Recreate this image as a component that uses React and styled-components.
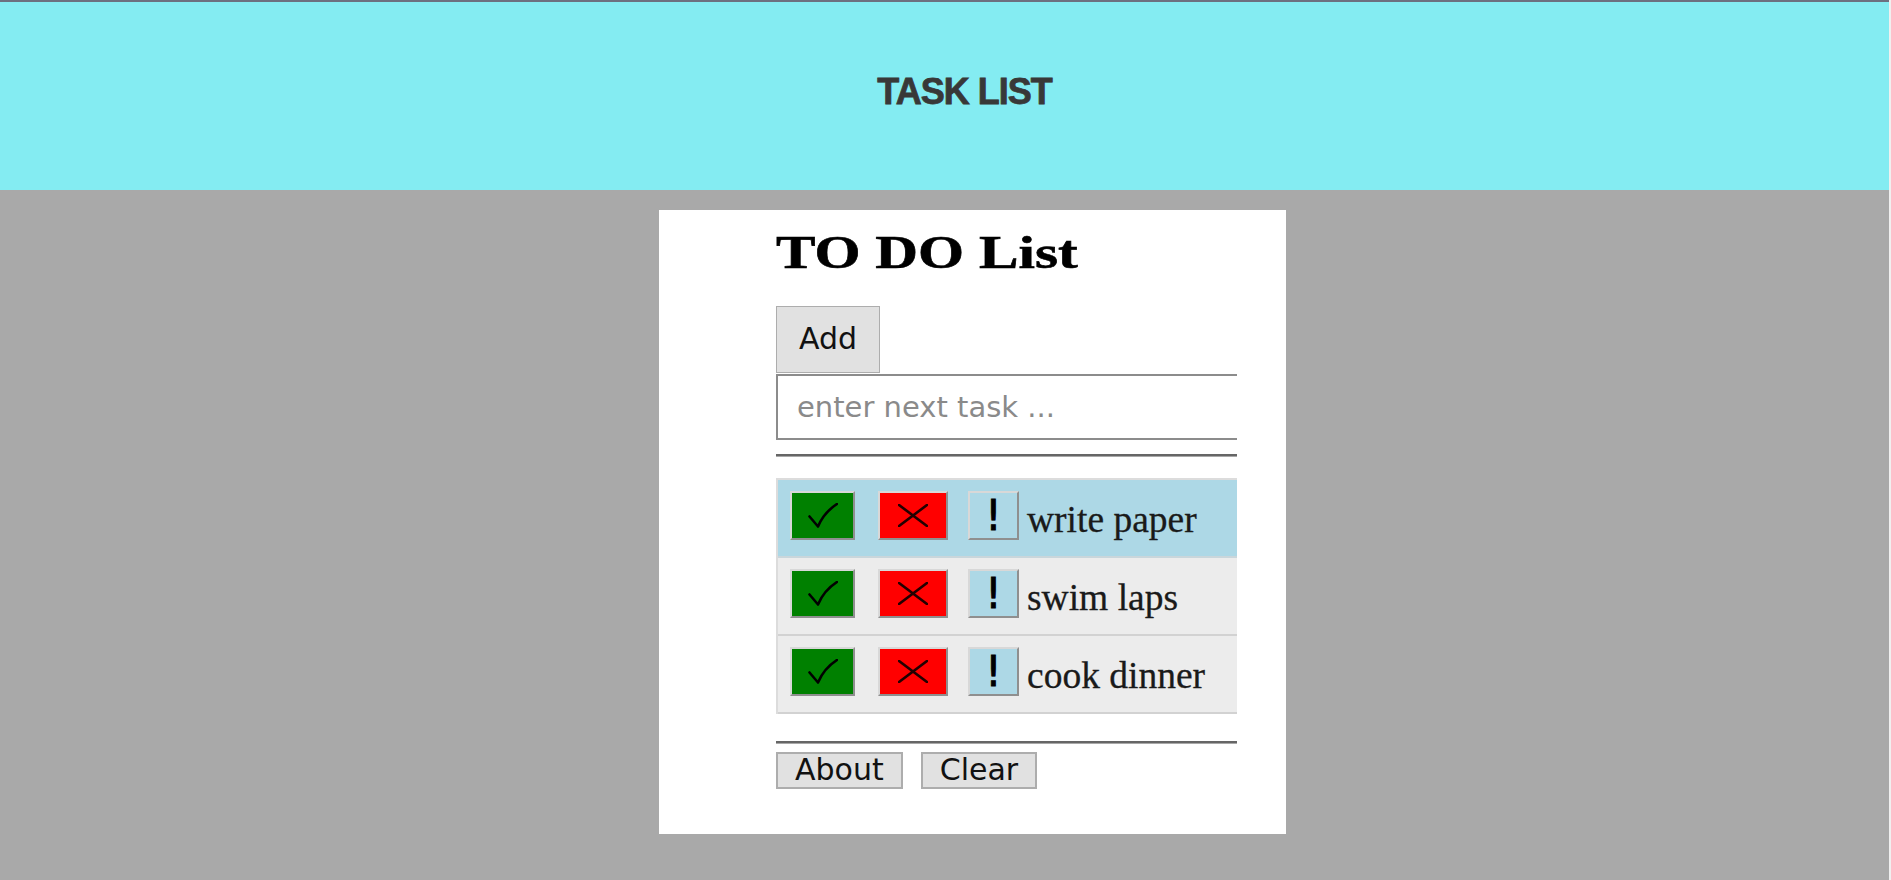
import React from "react";
import styled, { createGlobalStyle } from "styled-components";

const GlobalStyle = createGlobalStyle`
  html, body {
    margin: 0;
    padding: 0;
    background: #f0f0f0;
  }
  * {
    box-sizing: border-box;
  }
`;

const Page = styled.div`
  width: calc(100% - 2px);
  min-height: 100vh;
  background: #a9a9a9;
`;

const Header = styled.header`
  height: 190px;
  background: #84ecf2;
  border-top: 2px solid #6d7080;
  display: flex;
  align-items: center;
  justify-content: center;
  padding: 0 0 9px 40px;
`;

const HeaderTitle = styled.h1`
  margin: 0;
  font-family: "Liberation Sans", Arial, sans-serif;
  font-weight: bold;
  font-size: 36px;
  line-height: 1;
  letter-spacing: -1px;
  color: #383838;
  -webkit-text-stroke: 0.8px #383838;
`;

const Main = styled.main`
  display: flex;
  justify-content: center;
  padding: 20px 0 0 56px;
`;

const Card = styled.section`
  width: 627px;
  background: #ffffff;
  padding: 15px 49px 45px 117px;
`;

const App = styled.div`
  width: 461px;
  overflow: hidden;
  display: flex;
  flex-direction: column;
  align-items: flex-start;
`;

const Title = styled.h2`
  margin: 0;
  font-family: "Liberation Serif", serif;
  font-weight: bold;
  font-size: 47px;
  line-height: 54px;
  color: #000;
  -webkit-text-stroke: 0.6px #000;
  transform: scaleX(1.26);
  transform-origin: left center;
`;

const GreyButton = styled.button`
  font-family: "DejaVu Sans", Verdana, sans-serif;
  font-size: 30px;
  line-height: 1;
  color: #111;
  background: #e1e1e1;
  border: ${(p) => (p.$thick ? "2px" : "1px")} solid #adadad;
  padding: ${(p) => p.$pad};
  margin: 0;
  cursor: pointer;
`;

const InputRow = styled.div`
  margin-top: 1px;
`;

const TaskInput = styled.input`
  width: 540px;
  height: 66px;
  border: 2px solid #8c8c8c;
  padding: 0 19px;
  font-family: "DejaVu Sans", Verdana, sans-serif;
  font-size: 29px;
  color: #333;
  outline: none;
  &::placeholder {
    color: #8a8a8a;
  }
`;

const Rule = styled.hr`
  width: 100%;
  margin: ${(p) => p.$top}px 0 0;
  border: none;
  border-top: 2px solid #666;
  border-bottom: 1px solid #a8a8a8;
  height: 0;
`;

const List = styled.ul`
  list-style: none;
  margin: 21px 0 0;
  padding: 0;
  width: 100%;
  border-top: 2px solid #dcdcdc;
  border-left: 2px solid #dcdcdc;
`;

const Row = styled.li`
  height: 78px;
  display: flex;
  align-items: flex-start;
  padding: 11px 0 0 12px;
  background: ${(p) => (p.$active ? "#add8e6" : "#ececec")};
  border-bottom: 2px solid ${(p) => (p.$active ? "#c9d6db" : "#d2d2d2")};
`;

const IconButton = styled.button`
  width: ${(p) => p.$w}px;
  height: 49px;
  margin: 0 ${(p) => p.$gap}px 0 0;
  padding: 0;
  display: flex;
  align-items: center;
  justify-content: center;
  background: ${(p) => p.$bg};
  border: 2px solid;
  border-color: #d8d8d8 #8f8f8f #8f8f8f #d8d8d8;
  cursor: pointer;
`;

const Bang = styled.span`
  font-family: "DejaVu Sans", Verdana, sans-serif;
  font-size: 42px;
  line-height: 1;
  color: #000;
  -webkit-text-stroke: 0.8px #000;
`;

const TaskText = styled.span`
  font-family: "Liberation Serif", "Times New Roman", serif;
  font-size: 37.5px;
  line-height: 49px;
  margin-top: 4px;
  color: #1a1a1a;
  -webkit-text-stroke: 0.3px #1a1a1a;
  white-space: nowrap;
`;

const Footer = styled.div`
  display: flex;
  gap: 18px;
  margin-top: 8px;
`;

const Check = () => (
  <svg width="30" height="25" viewBox="0 0 30 25">
    <path
      d="M1.5 13.5 L10 23.5 C14 14 20.5 6.5 29 1"
      fill="none"
      stroke="#000"
      strokeWidth="2.6"
      strokeLinecap="round"
      strokeLinejoin="round"
    />
  </svg>
);

const Cross = () => (
  <svg width="30" height="23" viewBox="0 0 30 23">
    <path
      d="M1 1 L29 22 M29 1 L1 22"
      fill="none"
      stroke="#220000"
      strokeWidth="2.6"
      strokeLinecap="round"
    />
  </svg>
);

const tasks = [
  { text: "write paper", active: true },
  { text: "swim laps", active: false },
  { text: "cook dinner", active: false },
];

export default function TaskListPage() {
  return (
    <>
      <GlobalStyle />
      <Page>
        <Header>
          <HeaderTitle>TASK LIST</HeaderTitle>
        </Header>
        <Main>
          <Card>
            <App>
              <Title>TO DO List</Title>
              <GreyButton style={{ marginTop: 27 }} $pad="17px 22px 18px">
                Add
              </GreyButton>
              <InputRow>
                <TaskInput placeholder="enter next task ..." />
              </InputRow>
              <Rule $top={14} />
              <List>
                {tasks.map((t) => (
                  <Row key={t.text} $active={t.active}>
                    <IconButton $w={65} $gap={23} $bg="#008000">
                      <Check />
                    </IconButton>
                    <IconButton $w={70} $gap={20} $bg="#ff0000">
                      <Cross />
                    </IconButton>
                    <IconButton $w={51} $gap={8} $bg="#add8e6">
                      <Bang>!</Bang>
                    </IconButton>
                    <TaskText>{t.text}</TaskText>
                  </Row>
                ))}
              </List>
              <Rule $top={27} />
              <Footer>
                <GreyButton $thick $pad="1px 17px 2px">
                  About
                </GreyButton>
                <GreyButton $thick $pad="1px 17px 2px">
                  Clear
                </GreyButton>
              </Footer>
            </App>
          </Card>
        </Main>
      </Page>
    </>
  );
}
